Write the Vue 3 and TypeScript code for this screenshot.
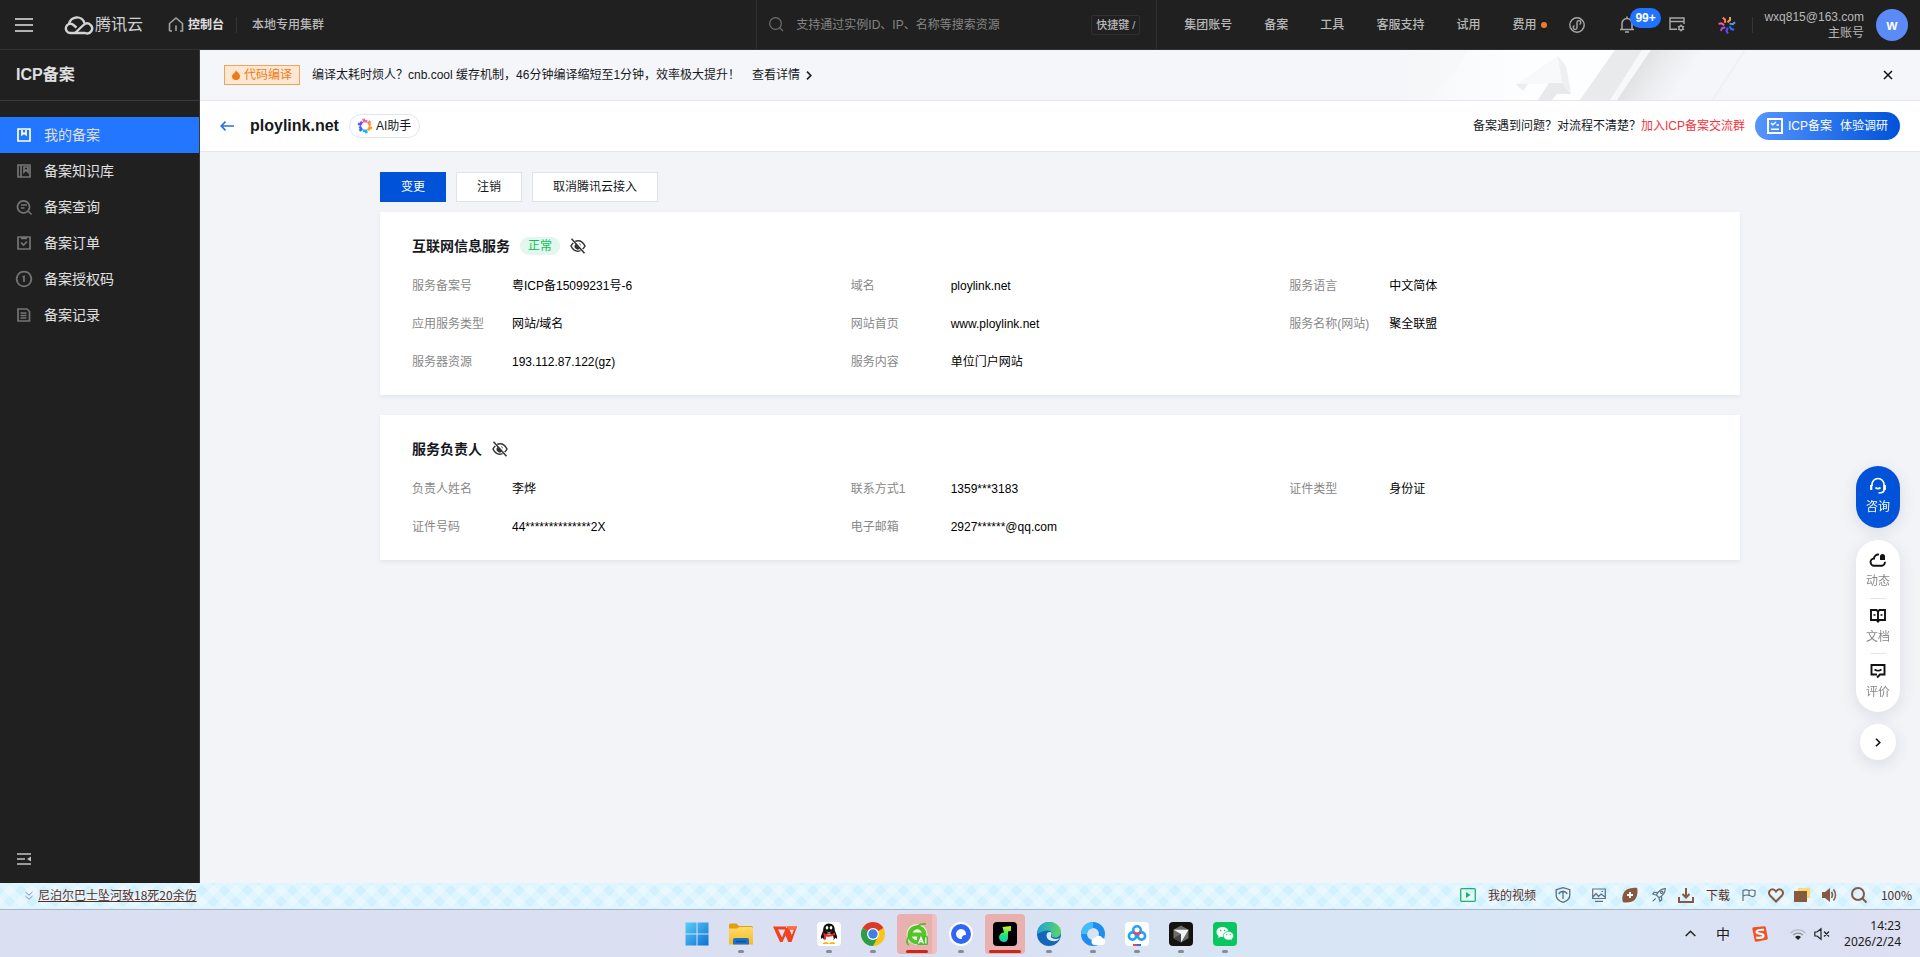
<script setup lang="ts">
interface NavItem {
  label: string
  icon: string
  active?: boolean
}

interface Field {
  label: string
  value: string
}

interface Section {
  title: string
  status?: string
  fields: Field[]
}

const topLinks: string[] = ['集团账号', '备案', '工具', '客服支持', '试用']

const navItems: NavItem[] = [
  { label: '我的备案', icon: 'M1 1h12v12H1zM5 2v4.5l2-1.5 2 1.500V2', active: true },
  { label: '备案知识库', icon: 'M1 1h12v12H1zM4 1v12M7 3v5l2-2 2 2V3z' },
  { label: '备案查询', icon: 'M6.500 .8a6 6 0 1 0 .01 0M11 11l3.500 3.500M4 5h6M4 8h3.500' },
  { label: '备案订单', icon: 'M1 1h12v12H1zM4 6.500l2.500 2.500L10 5.500M4 2.500h6' },
  { label: '备案授权码', icon: 'M7-.3a7.300 7.300 0 1 0 .01 0M5.500 5L7 4.500V10' },
  { label: '备案记录', icon: 'M1 1h9l2.500 2.500V13H1zM3.500 5h6M3.500 7.500h6M3.500 10h6' },
]

const sections: Section[] = [
  {
    title: '互联网信息服务',
    status: '正常',
    fields: [
      { label: '服务备案号', value: '粤ICP备15099231号-6' },
      { label: '域名', value: 'ploylink.net' },
      { label: '服务语言', value: '中文简体' },
      { label: '应用服务类型', value: '网站/域名' },
      { label: '网站首页', value: 'www.ploylink.net' },
      { label: '服务名称(网站)', value: '聚全联盟' },
      { label: '服务器资源', value: '193.112.87.122(gz)' },
      { label: '服务内容', value: '单位门户网站' },
    ],
  },
  {
    title: '服务负责人',
    fields: [
      { label: '负责人姓名', value: '李烨' },
      { label: '联系方式1', value: '1359***3183' },
      { label: '证件类型', value: '身份证' },
      { label: '证件号码', value: '44**************2X' },
      { label: '电子邮箱', value: '2927******@qq.com' },
    ],
  },
]

const sparkAngles: number[] = [0, 51, 103, 154, 206, 257, 309]
const sparkColors: string[] = ['#f5a040', '#3fa6e8', '#2f6bff', '#5b4bff', '#b04be0', '#f0609a', '#ff7a5c']
const aiAngles: number[] = [0, 60, 120, 180, 240, 300]
const aiColors: string[] = ['#ff5c9a', '#ff8a5c', '#ffa000', '#18b4ff', '#2f6bff', '#6a4bff']
</script>

<template>
  <div class="screen">
    <header class="topbar">
      <button class="plain menu-btn" aria-label="菜单">
        <svg width="18" height="14" viewBox="0 0 18 14"><path d="M0 1h18M0 7h18M0 13h18" stroke="#b3b3b3" stroke-width="2" /></svg>
      </button>
      <a href="#" class="brand">
        <svg width="26" height="20" viewBox="0 0 26 20" fill="none" stroke="#d4d4d4" stroke-width="2.400" stroke-linejoin="round">
          <path d="M5 9A8 8 0 0 1 20.500 8" />
          <path d="M11 18 L20 9.500a5 5 0 1 1 1 8.500H6.200A4.600 4.600 0 1 1 9.500 10l3 2.600" />
        </svg>
        <span>腾讯云</span>
      </a>
      <a href="#" class="console">
        <svg width="16" height="15" viewBox="0 0 16 15" fill="none" stroke="#a3a3a3" stroke-width="1.600"><path d="M1.500 14V6.500L8 1l6.500 5.500V14H12M4 14H1.500M8 14V8.500" /></svg>
        <span>控制台</span>
      </a>
      <span class="sep"></span>
      <a href="#" class="cluster">本地专用集群</a>

      <div class="search">
        <svg width="15" height="15" viewBox="0 0 15 15" fill="none" stroke="#707070" stroke-width="1.200"><circle cx="6.500" cy="6.500" r="5.800" /><path d="M10.500 10.500L14 14" /></svg>
        <input type="text" aria-label="搜索资源" placeholder="支持通过实例ID、IP、名称等搜索资源" />
        <kbd>快捷键 /</kbd>
      </div>

      <div class="tools">
        <a v-for="link in topLinks" :key="link" href="#" class="tool-link">{{ link }}</a>
        <a href="#" class="tool-link fee">费用<i></i></a>
        <button class="plain mini" aria-label="小程序">
          <svg width="16" height="16" viewBox="0 0 16 16" fill="none" stroke="#a8a8a8" stroke-width="1.400"><circle cx="8" cy="8" r="7.200" /><path d="M10.400 7.300A1.900 1.900 0 1 0 8 5.600V10.400A1.900 1.900 0 1 1 5.600 8.700" /></svg>
        </button>
        <button class="plain bell" aria-label="消息">
          <svg width="16" height="17" viewBox="0 0 16 17" fill="none" stroke="#a8a8a8" stroke-width="1.500"><path d="M1 13.500h14M3 13V7.500a5 5 0 0 1 10 0V13M8 .5v2M6 16h4" /></svg>
          <b>99+</b>
        </button>
        <button class="plain panel" aria-label="设置">
          <svg width="16" height="15" viewBox="0 0 16 15" fill="none" stroke="#a8a8a8" stroke-width="1.400"><path d="M8 12.300H1V1h14v6M1 4.500h14" /><circle cx="12" cy="11" r="2" /><path d="M12 7.500V9M12 13v1.500M8.900 9.200l1.300.8M13.800 12l1.300.8M8.900 12.800l1.300-.8M13.800 10l1.300-.8" stroke-width="1.200" /></svg>
        </button>
        <button class="plain spark" aria-label="助手">
          <svg width="16" height="16" viewBox="-8 -8 16 16" fill="none" stroke-width="2">
            <path v-for="(a, i) in sparkAngles" :key="a" d="M.5-2.800L3-5V-8" :stroke="sparkColors[i]" :transform="`rotate(${a})`" />
          </svg>
        </button>
        <span class="sep"></span>
        <div class="account"><span>wxq815@163.com</span><span>主账号</span></div>
        <button class="avatar" aria-label="账号">w</button>
      </div>
    </header>

    <div class="body">
      <aside class="sidebar">
        <h2>ICP备案</h2>
        <nav>
          <a v-for="item in navItems" :key="item.label" href="#" :class="{ active: item.active }">
            <svg width="16" height="16" viewBox="-1 -1 16 16" fill="none" stroke="currentColor" stroke-width="1.700"><path :d="item.icon" /></svg>
            <span>{{ item.label }}</span>
          </a>
        </nav>
        <button class="plain fold" aria-label="收起菜单">
          <svg width="14" height="12" viewBox="0 0 14 12"><path d="M0 1h14M0 6h8M0 11h14" stroke="#c2c2c2" stroke-width="1.500" /><path d="M14 3.500v5L10 6z" fill="#c2c2c2" /></svg>
        </button>
      </aside>

      <main>
        <div class="notice">
          <svg class="notice-art" width="360" height="50" viewBox="0 0 360 50" aria-hidden="true">
            <defs>
              <linearGradient id="haze" x1="0" x2="1"><stop offset="0" stop-color="#f9fafc" stop-opacity="0" /><stop offset=".25" stop-color="#f9fafc" /><stop offset=".6" stop-color="#fdfeff" /></linearGradient>
              <linearGradient id="shade" gradientUnits="userSpaceOnUse" x1="230" y1="22" x2="272" y2="50"><stop offset="0" stop-color="#dfe0e2" /><stop offset=".5" stop-color="#ecedef" /><stop offset="1" stop-color="#f5f6f9" /></linearGradient>
            </defs>
            <path d="M0 0H215L180 50H0z" fill="url(#haze)" />
            <path d="M68 0L35 50H0V0z" fill="#f5f6f8" opacity=".6" />
            <path d="M248 0H325L290 50H216z" fill="url(#shade)" />
            <path d="M215 0H244L211 50H180z" fill="#e9eaec" />
            <path d="M242 0h9L217 50h-7z" fill="#f7f8fa" />
            <path d="M116 34L158 6l7 10 6 28-9-10h-14z" fill="#f8f9fb" />
            <path d="M158 6l8 10 5 27-9-10z" fill="#eeeff1" />
            <path d="M116 34h12l-5 7z" fill="#ebecee" />
            <path d="M149 33h13l9 11H157l-5 6H138z" fill="#e8e9eb" />
            <path d="M344 0h2l-32 50h-3z" fill="#f0f1f3" />
          </svg>
          <span class="tag">
            <svg width="8" height="10" viewBox="0 0 8 10"><path d="M4 0c.5 2 4 3.300 4 6.200A3.900 3.900 0 0 1 4 10 3.900 3.900 0 0 1 0 6.200C0 4 3.500 3 4 0z" fill="#ed7b16" /></svg>
            代码编译
          </span>
          <span class="notice-text">编译太耗时烦人？cnb.cool 缓存机制，46分钟编译缩短至1分钟，效率极大提升！</span>
          <a href="#" class="more">查看详情
            <svg width="6" height="9" viewBox="0 0 6 9" fill="none" stroke="#222" stroke-width="1.700"><path d="M1 .7l3.800 3.800L1 8.300" /></svg>
          </a>
          <button class="plain close" aria-label="关闭">
            <svg width="10" height="10" viewBox="0 0 10 10" stroke="#111" stroke-width="1.500"><path d="M1 1l8 8M9 1L1 9" /></svg>
          </button>
        </div>

        <div class="title-row">
          <button class="plain back" aria-label="返回">
            <svg width="14" height="10" viewBox="0 0 14 10" fill="none" stroke="#2b6fe0" stroke-width="1.700"><path d="M5.500 .7L1.300 5l4.200 4.300M1.300 5H14" /></svg>
          </button>
          <h1>ploylink.net</h1>
          <button class="ai">
            <svg width="14" height="14" viewBox="-7 -7 14 14" fill="none" stroke-width="2.600">
              <path v-for="(a, i) in aiAngles" :key="a" d="M-1.500-7.200L-1-4.800 2.300-4.800" :stroke="aiColors[i]" :transform="`rotate(${a})`" />
            </svg>
            AI助手
          </button>
          <p class="help">备案遇到问题？对流程不清楚？<a href="#">加入ICP备案交流群</a></p>
          <button class="survey">
            <svg width="16" height="16" viewBox="0 0 16 16" fill="none" stroke="#fff"><path d="M1 1h14v14H1z" stroke-width="2" /><path d="M4 5l1.800 1.800L9 4M9.500 7H12M4 11.200h8" stroke-width="1.500" /></svg>
            <span>ICP备案</span><span>体验调研</span>
          </button>
        </div>

        <div class="content">
          <div class="actions">
            <button class="primary">变更</button>
            <button>注销</button>
            <button>取消腾讯云接入</button>
          </div>
          <section v-for="section in sections" :key="section.title" class="card">
            <header>
              <h3>{{ section.title }}</h3>
              <span v-if="section.status" class="status">{{ section.status }}</span>
              <button class="plain eye" aria-label="显示完整信息">
                <svg width="16" height="16" viewBox="0 0 16 16" fill="none" stroke="#333" stroke-width="1.500">
                  <path d="M5.300 3.300C9.500 1.800 13 4 15 8c-.6 1.200-1.400 2.200-2.300 3M10.500 12.600C6.500 14.200 3 12 1 8c.6-1.200 1.400-2.200 2.300-3M1.500 .8l13 14.500" />
                  <path d="M5.500 6A3 3 0 0 0 10 10.500zM8.500 5A3 3 0 0 1 11 8z" fill="#333" stroke="none" />
                </svg>
              </button>
            </header>
            <dl>
              <div v-for="field in section.fields" :key="field.label">
                <dt>{{ field.label }}</dt>
                <dd>{{ field.value }}</dd>
              </div>
            </dl>
          </section>
        </div>
      </main>

      <div class="float">
        <button class="consult">
          <svg width="16" height="16" viewBox="0 0 16 16" fill="none" stroke="#fff" stroke-width="1.700"><path d="M2 8V6.500a6 6 0 0 1 12 0V12q0 3-5.500 3" /><path d="M5.500 9.500q2.500 2.300 5 0" /><path d="M1.200 7v5M14.800 7v5" stroke-width="2.200" /></svg>
          <span>咨询</span>
        </button>
        <div class="float-group">
          <button>
            <svg width="16" height="14" viewBox="0 0 16 14" fill="none" stroke="#111" stroke-width="1.900"><path d="M9 1.700A4 4 0 0 0 4 5.500 3.600 3.600 0 0 0 4.300 12.700H12a3.300 3.300 0 0 0 2.800-4" /><path d="M10 7V3.500a2.500 2.500 0 0 1 5 0V7z" fill="#111" stroke="none" /></svg>
            <span>动态</span>
          </button>
          <button>
            <svg width="16" height="14" viewBox="0 0 16 14" fill="none" stroke="#111" stroke-width="1.900"><path d="M8 12.500L6.500 11H1V1h5.500L8 2.500 9.500 1H15v10H9.500zM8 2v11.500" /><path d="M3.500 6h2M10.500 6h2" stroke-width="1.400" /></svg>
            <span>文档</span>
          </button>
          <button>
            <svg width="16" height="14" viewBox="0 0 16 14" fill="none" stroke="#111" stroke-width="1.900"><path d="M7 10.500H1.500V1h13v9.500H10L7 13.500" /><path d="M4.500 5.500q3.500 2.500 7 0" stroke-width="1.600" /></svg>
            <span>评价</span>
          </button>
        </div>
        <button class="expand" aria-label="展开">
          <svg width="6" height="9" viewBox="0 0 6 9" fill="none" stroke="#111" stroke-width="1.600"><path d="M1 .7l3.800 3.800L1 8.300" /></svg>
        </button>
      </div>
    </div>

    <div class="statusbar">
      <button class="plain" aria-label="展开资讯">
        <svg width="8" height="9" viewBox="0 0 8 9" fill="none" stroke="#7a93a8"><path d="M.5 1L4 4.300 7.500 1M.5 5L4 8.300 7.500 5" /></svg>
      </button>
      <a href="#" class="news">尼泊尔巴士坠河致18死20余伤</a>
      <div class="status-tools">
        <button class="plain g-video">
          <svg width="16" height="14" viewBox="0 0 16 14"><rect x=".7" y=".7" width="14.600" height="12.600" rx="1" fill="none" stroke="#1fb45c" stroke-width="1.300" /><path d="M6 4v6l4.500-3z" fill="#1fb45c" /></svg>
          我的视频
        </button>
        <button class="plain g-shield" aria-label="安全">
          <svg width="16" height="16" viewBox="0 0 16 16" fill="none" stroke="#5d7080" stroke-width="1.300"><path d="M8 .7l6.800 2v5.500c0 3.500-3 5.800-6.800 7.200C4.200 14 1.200 11.700 1.200 8.200V2.700z" /><path d="M3.800 7q1-2.500 4.200-2.500T12.200 7M8 3.500V12" /></svg>
        </button>
        <button class="plain g-image" aria-label="图片">
          <svg width="14" height="14" viewBox="0 0 14 14" fill="none" stroke="#5d7080" stroke-width="1.200"><path d="M.7 1h12.600v9.500H.7zM1 9l3-3.500 2.500 3L9 6l4 3M3 13.300h8M9.500 3.500h1.500" /></svg>
        </button>
        <button class="plain g-plus" aria-label="扩展">
          <svg width="16" height="16" viewBox="0 0 16 16"><path d="M15 .8C15.800 2.500 16 9 13 12.500 11 15 6 16 1 15.200-.3 12 .2 6.500 3.500 3.500 6.500.8 11.500.3 15 .8z" fill="#87593f" /><path d="M8 5v6M5 8h6" stroke="#fff" stroke-width="1.800" /></svg>
        </button>
        <button class="plain g-rocket" aria-label="加速">
          <svg width="14" height="14" viewBox="0 0 14 14" fill="none" stroke="#5d7080" stroke-width="1.200"><path d="M13.300.7C9 .8 6.500 3 4.300 7L7 9.700C11 7.500 13.200 5 13.300.7zM5.500 4.500L2 4.300.8 6l3 1M9.500 8.500l.2 3.500L8 13.200l-1-3M.7 13.300l3-3" /><circle cx="9.700" cy="4.300" r="1.200" /></svg>
        </button>
        <button class="plain g-down">
          <svg width="16" height="16" viewBox="0 0 16 16" fill="none" stroke="#87593f" stroke-width="2"><path d="M1 10v5h14v-5M8 1v9M4.500 7L8 10.500 11.500 7" /></svg>
          下载
        </button>
        <button class="plain g-flag" aria-label="标记">
          <svg width="14" height="12" viewBox="0 0 14 12" fill="none" stroke="#5d7080" stroke-width="1.200"><path d="M1 12V1.500q3-1.200 6 0 3-1 6 0V6q-1 1.800-3 1.500L7 6.300Q4 5.500 1 7M7 1.500v5" /></svg>
        </button>
        <button class="plain g-heart" aria-label="收藏">
          <svg width="16" height="15" viewBox="0 0 16 15" fill="none" stroke="#87593f" stroke-width="2"><path d="M8 13.500L2 7.500C-.3 4.500 2 1.200 4.500 1.200 6.500 1.200 8 3.500 8 3.500s1.500-2.300 3.500-2.300C14 1.200 16.300 4.500 14 7.500z" /></svg>
        </button>
        <button class="plain g-skin" aria-label="窗口">
          <svg width="16" height="14" viewBox="0 0 16 14"><path d="M4 0h12v10H4z" fill="#ffd773" /><path d="M0 3h13v11H0z" fill="#87593f" /></svg>
        </button>
        <button class="plain g-vol" aria-label="声音">
          <svg width="15" height="14" viewBox="0 0 15 14"><path d="M0 4h3l5-4v14l-5-4H0z" fill="#87593f" /><path d="M9.500 4q2 3 0 6M11.500 1.500q4 5.500 0 11" fill="none" stroke="#87593f" stroke-width="1.500" /></svg>
        </button>
        <button class="plain g-find" aria-label="查找">
          <svg width="16" height="16" viewBox="0 0 16 16" fill="none" stroke="#87593f" stroke-width="2"><circle cx="7" cy="7" r="6" /><path d="M11.500 11.500l4 4" /></svg>
        </button>
        <button class="plain g-zoom">100%</button>
      </div>
    </div>

    <div class="taskbar">
      <div class="apps">
        <button class="app" aria-label="开始">
          <svg width="24" height="24" viewBox="0 0 24 24"><defs><linearGradient id="win" gradientUnits="userSpaceOnUse" x1="0" y1="0" x2="24" y2="24"><stop stop-color="#5cd0fa" /><stop offset="1" stop-color="#0a6fd0" /></linearGradient></defs><path d="M.5.500h11v11H.5zM12.500.500h11v11h-11zM.5 12.500h11v11H.5zM12.500 12.500h11v11h-11z" fill="url(#win)" /></svg>
        </button>
        <button class="app run" aria-label="文件资源管理器">
          <svg width="24" height="24" viewBox="0 0 24 24"><defs><linearGradient id="fold" y2="1" x2="0"><stop stop-color="#ffdc6b" /><stop offset="1" stop-color="#f8b920" /></linearGradient></defs><path d="M0 3q0-1.500 1.500-1.500h6L10 4h12.500Q24 4 24 5.500V9H0z" fill="#e0a010" /><path d="M0 6.500h8L10.500 5H22.500Q24 5 24 6.500V22.500H0z" fill="url(#fold)" /><path d="M4 22.500V18q0-2 2-2h12q2 0 2 2v4.500z" fill="#1a72c8" /><path d="M7 19.500h10" stroke="#0f4f94" stroke-width="1.500" /></svg>
        </button>
        <button class="app" aria-label="WPS">
          <svg width="24" height="24" viewBox="0 0 24 24"><path d="M0 4.500h13.500l-1.300 3H5l4 8L12.800 6h3l3 7L21 7.500h-6L13.800 4.500H24L18.500 20h-3.200L12.500 13.500 9.500 20H7z" fill="#f0421f" /><path d="M13.800 4.500H24l-1.200 3H15z" fill="#ff6a3c" /></svg>
        </button>
        <button class="app run" aria-label="QQ">
          <svg width="24" height="24" viewBox="0 0 24 24"><rect width="24" height="24" rx="4" fill="#fff" /><path d="M12 1.500c-4 0-6 3-5.800 7C5 11.500 3.500 14 4 16.500c.8.5 1.500-.5 2-1 .5 5 11.500 5 12 0 .5.5 1.200 1.500 2 1 .5-2.500-1-5-2.200-8 .2-4-1.800-7-5.800-7z" fill="#111" /><ellipse cx="12" cy="16.500" rx="4.700" ry="5" fill="#fff" /><ellipse cx="10" cy="5.800" rx="1.300" ry="1.800" fill="#fff" /><ellipse cx="14" cy="5.800" rx="1.300" ry="1.800" fill="#fff" /><path d="M8 9q4 2 8 0l-4 2z" fill="#ffb400" /><path d="M6 10.500q6 4 12 0v2.500q-4 2.500-9 1.500v3H7v-3.500z" fill="#e8262c" /><path d="M6 21.500q3-2 5.500 0zM12.500 21.500q3-2 5.500 0z" fill="#ffb400" stroke="#ffb400" /></svg>
        </button>
        <button class="app run" aria-label="Chrome">
          <svg width="24" height="24" viewBox="0 0 24 24"><circle cx="12" cy="12" r="12" fill="#f9c41b" /><path d="M12 12L1.600 6A12 12 0 0 1 22.400 6z" fill="#d93a2f" /><path d="M12 12L1.600 6A12 12 0 0 0 12 24l5-9z" fill="#2b9e4b" /><circle cx="12" cy="12" r="6" fill="#fff" /><circle cx="12" cy="12" r="4.700" fill="#3f7ee8" /></svg>
        </button>
        <button class="app run hot stack" aria-label="360浏览器">
          <svg width="24" height="24" viewBox="0 0 24 24" fill="none"><circle cx="12" cy="12.500" r="10.500" fill="#e9fbd8" /><path d="M18.500 16.500A7.500 7.500 0 1 1 19.500 12.500H6" stroke="#55c62c" stroke-width="4" /><path d="M4 23Q-1 21 6 11T21 2" stroke="#58b82f" stroke-width="1.600" /><rect x="12" y="14" width="11" height="9" rx="1.500" fill="#55b933" /><path d="M13.500 21.500l2.500-6 2.500 6M20.800 15.500v6M14.500 19.500h3" stroke="#fff" stroke-width="1.300" /></svg>
        </button>
        <button class="app run" aria-label="夸克">
          <svg width="24" height="24" viewBox="0 0 24 24"><circle cx="12" cy="12" r="12" fill="#fff" /><circle cx="12" cy="12" r="10" fill="#2f66f5" /><path d="M12 7a5 5 0 1 0 1 9.900c-.5-2.500 1-4 3.900-3.900A5 5 0 0 0 12 7z" fill="#fff" /></svg>
        </button>
        <button class="app run hot" aria-label="音乐">
          <svg width="24" height="24" viewBox="0 0 24 24"><defs><linearGradient id="note" y2="1" x2="0"><stop stop-color="#d7f51c" /><stop offset=".6" stop-color="#1fe27a" /><stop offset="1" stop-color="#16c8c8" /></linearGradient></defs><rect width="24" height="24" rx="4" fill="#000" /><path d="M9.500 5l8.500-1v5l-3 .5V15A5 5 0 0 1 12 20a5 5 0 0 1-6-4.500A5 5 0 0 1 11 10.500z" fill="url(#note)" /></svg>
        </button>
        <button class="app run" aria-label="Edge">
          <svg width="24" height="24" viewBox="0 0 24 24"><defs><linearGradient id="edge" x2="1" y2="0"><stop stop-color="#1aa3dc" /><stop offset="1" stop-color="#5fd662" /></linearGradient></defs><circle cx="12" cy="12" r="12" fill="#1466b8" /><path d="M0 11.500C1 4.500 6 0 12 0c7 0 12 5 12 9.500 0 4-3 6-6 6-2.500 0-4-.8-3.500-2 .5-1.500.5-5-4-5C5 8.500 2 12 0 11.500z" fill="url(#edge)" /><path d="M9.500 13.500c0-2.500 1.500-3.500 3.300-3.500 1.700 0 2.200 1.500 1.200 3.500-1 3 4.500 4.500 9 2.500-2 3-5 3.500-8 3-3.500-.5-5.500-2.500-5.500-5.500z" fill="#dcebf7" /></svg>
        </button>
        <button class="app run" aria-label="QQ浏览器">
          <svg width="24" height="24" viewBox="0 0 24 24"><circle cx="12" cy="12" r="9" fill="none" stroke="#1f8df0" stroke-width="6" /><path d="M3 12a9 9 0 0 1 9-9" fill="none" stroke="#43bdf8" stroke-width="6" /><path d="M14 23a3.500 3.500 0 0 1 0-7 4.200 4.200 0 0 1 7.500 0 3.600 3.600 0 0 1 0 7z" fill="#fff" /></svg>
        </button>
        <button class="app run" aria-label="百度网盘">
          <svg width="24" height="24" viewBox="0 0 24 24" fill="none" stroke-width="2.600"><rect width="24" height="24" rx="4" fill="#fff" /><circle cx="12" cy="8" r="3.800" stroke="#2a9df4" /><circle cx="7.500" cy="14" r="3.600" stroke="#19a7f2" /><circle cx="16.500" cy="14" r="3.600" stroke="#2a9df4" /><path d="M8.500 10q3.500 4 7 0" stroke="#f04455" /><path d="M8 23h4" stroke="#f04455" stroke-width="2" /><path d="M12 23h4" stroke="#2a6df4" stroke-width="2" /></svg>
        </button>
        <button class="app run" aria-label="Cursor">
          <svg width="24" height="24" viewBox="0 0 24 24"><rect width="24" height="24" rx="4" fill="#15130f" /><path d="M12 3.500l7.500 4.200v8.600L12 20.500l-7.500-4.200V7.700z" fill="#6d6d6d" /><path d="M4.500 7.700h15L12 20.500v-8.500z" fill="#f2f2f2" /><path d="M4.500 16.300L12 12v8.500z" fill="#444" /></svg>
        </button>
        <button class="app run" aria-label="微信">
          <svg width="24" height="24" viewBox="0 0 24 24"><rect width="24" height="24" rx="4" fill="#08c660" /><path d="M9.500 5C6 5 3.500 7.300 3.500 10c0 1.600.8 3 2.200 3.900L5 16l2.500-1.200q1 .3 2 .3C13 15 15.500 12.700 15.500 10S13 5 9.500 5z" fill="#fff" /><path d="M15.500 9.500c-3 0-5.200 2-5.200 4.300s2.200 4.300 5.200 4.300q.9 0 1.700-.3l2.100 1-.5-1.800c1.200-.8 1.900-2 1.900-3.200 0-2.300-2.200-4.300-5.200-4.300z" fill="#fff" stroke="#08c660" stroke-width=".7" /><path d="M7 8.500h1.200M11 8.500h1.200M13.300 12.500h1M16.700 12.500h1" stroke="#08c660" stroke-width="1.300" /></svg>
        </button>
      </div>
      <div class="tray">
        <button class="plain t-up" aria-label="显示隐藏的图标"><svg width="11" height="7" viewBox="0 0 11 7" fill="none" stroke="#222" stroke-width="1.500"><path d="M.7 6l4.800-4.800L10.300 6" /></svg></button>
        <button class="plain t-ime">中</button>
        <button class="plain t-sogou" aria-label="输入法"><svg width="16" height="16" viewBox="0 0 16 16"><path d="M.3 2.800Q.2 1.500 1.500 1.300L12 .2q1.500-.1 1.800 1.200L15.800 12q.2 1.500-1.200 1.800L4.500 15.800Q3 16 2.700 14.500z" fill="#f0532a" /><path d="M12 3.800Q5 3.500 4.500 6c0 2.500 7 .8 7 3.700 0 2.300-4 2.300-7.300 2" fill="none" stroke="#fff" stroke-width="2.200" /></svg></button>
        <button class="plain t-wifi" aria-label="网络"><svg width="16" height="12" viewBox="0 0 16 12" fill="none"><path d="M.8 5a10 10 0 0 1 14.400 0" stroke="#b5bac6" stroke-width="1.200" /><path d="M3 7.200a7 7 0 0 1 10 0" stroke="#8a8f9a" stroke-width="1.200" /><path d="M5 9a4.500 4.500 0 0 1 6 0L8 12z" fill="#222" /></svg></button>
        <button class="plain t-mute" aria-label="静音"><svg width="16" height="12" viewBox="0 0 16 12" fill="none" stroke="#222" stroke-width="1.200"><path d="M.8 4H3l4-3.200v10.400L3 8H.8zM10 3.500l5 5M15 3.500l-5 5" /></svg></button>
        <div class="clock"><span>14:23</span><span>2026/2/24</span></div>
      </div>
    </div>
  </div>
</template>

<style>
body {
  margin: 0;
}
</style>

<style scoped>
.screen {
  display: flex;
  flex-direction: column;
  min-height: 100vh;
  font: 12px/20px "Liberation Sans", "Noto Sans CJK SC", sans-serif;
  color: #16181d;
  background: #f2f4f8;
}

* {
  box-sizing: border-box;
}

button,
input,
kbd {
  font: inherit;
  color: inherit;
}

button {
  cursor: pointer;
}

a {
  color: inherit;
  text-decoration: none;
}

svg {
  display: block;
  flex: none;
  overflow: visible;
}

.plain {
  display: flex;
  align-items: center;
  padding: 0;
  border: 0;
  background: none;
}

/* top bar */
.topbar {
  display: flex;
  align-items: center;
  height: 50px;
  padding: 0 12px 0 15px;
  background: #202020;
  border-bottom: 1px solid #303030;
  color: #b8b8b8;
  white-space: nowrap;
}

.brand {
  display: flex;
  align-items: center;
  gap: 5px;
  margin-left: 31px;
  font-size: 16px;
  color: #d0d0d0;
}

.console {
  display: flex;
  align-items: center;
  gap: 4px;
  margin-left: 25px;
  font-weight: 700;
  color: #e0e0e0;
}

.sep {
  width: 1px;
  height: 16px;
  margin: 0 15px 0 12px;
  background: #343434;
}

.cluster,
.tool-link {
  font-weight: 500;
}

.search {
  display: flex;
  align-items: center;
  flex: 0 1 401px;
  height: 49px;
  margin-left: auto;
  padding: 0 16px 0 12px;
  border: solid #303030;
  border-width: 0 1px;
}

.search input {
  flex: 1;
  min-width: 0;
  margin-left: 12px;
  padding: 0;
  border: 0;
  outline: 0;
  background: none;
}

.search input::placeholder {
  color: #858585;
  opacity: 1;
}

.search kbd {
  padding: 0 4px;
  border: 1px solid #303030;
  border-radius: 2px;
  font-size: 11px;
  line-height: 18px;
  font-weight: 500;
}

.tools {
  display: flex;
  align-items: center;
  padding-left: 11px;
}

.tool-link {
  padding: 0 16px;
}

.fee {
  display: flex;
  align-items: center;
  gap: 5px;
  padding-right: 0;
}

.fee i {
  width: 6px;
  height: 6px;
  border-radius: 50%;
  background: #ed7b2f;
}

.mini {
  margin-left: 22px;
}

.bell {
  position: relative;
  margin-left: 34px;
}

.bell b {
  position: absolute;
  left: 11px;
  top: -8px;
  padding: 0 5px;
  border-radius: 10px;
  background: #1f73ff;
  color: #fff;
}

.panel,
.spark {
  margin-left: 34px;
}

.tools .sep {
  margin: 0 11px 0 17px;
}

.account {
  display: flex;
  flex-direction: column;
  align-items: flex-end;
  line-height: 16px;
}

.avatar {
  width: 32px;
  height: 32px;
  margin-left: 12px;
  padding: 0;
  border: 0;
  border-radius: 50%;
  background: #5a8bf7;
  color: #fff;
  font-size: 14px;
  font-weight: 700;
}

/* main frame */
.body {
  display: flex;
  flex: 1;
}

.sidebar {
  display: flex;
  flex-direction: column;
  flex: none;
  width: 200px;
  background: #202020;
  border-right: 1px solid #3a3a3a;
  color: #e0e0e0;
}

.sidebar h2 {
  margin: 0;
  padding: 13px 16px 13px;
  border-bottom: 1px solid #3a3a3a;
  font-size: 16px;
  line-height: 24px;
}

.sidebar nav {
  margin-top: 16px;
}

.sidebar nav a {
  display: flex;
  align-items: center;
  gap: 12px;
  height: 36px;
  padding-left: 16px;
  font-size: 14px;
}

.sidebar nav svg {
  color: #747474;
}

.sidebar nav .active {
  background: #2276ff;
}

.sidebar nav .active svg {
  color: #fff;
}

.fold {
  margin: auto 0 18px 17px;
}

main {
  flex: 1;
  min-width: 0;
}

.notice {
  position: relative;
  display: flex;
  align-items: center;
  height: 51px;
  padding: 0 27px 0 24px;
  background: #f5f6f9;
  border-bottom: 1px solid #e5e7ed;
}

.notice-art {
  position: absolute;
  right: 160px;
  top: 0;
}

.tag {
  display: flex;
  align-items: center;
  gap: 4px;
  padding: 0 7px;
  border: 1px solid #f5a35b;
  background: #ffe8d3;
  color: #ed7b16;
  line-height: 18px;
}

.notice-text {
  margin-left: 12px;
}

.more {
  display: flex;
  align-items: center;
  gap: 6px;
  margin-left: 12px;
}

.close {
  margin-left: auto;
}

.title-row {
  display: flex;
  align-items: center;
  height: 51px;
  padding: 0 20px;
  background: #fff;
  border-bottom: 1px solid #e5e7ed;
}

.title-row h1 {
  margin: 0 0 0 16px;
  font-size: 16px;
  line-height: 24px;
}

.ai {
  display: flex;
  align-items: center;
  gap: 4px;
  height: 24px;
  margin-left: 10px;
  padding: 0 8px;
  border: 1px solid #e2e5ec;
  border-radius: 12px;
  background: #fff;
}

.help {
  margin: 0 0 0 auto;
}

.help a {
  color: #f5333c;
}

.survey {
  display: flex;
  align-items: center;
  gap: 5px;
  height: 28px;
  margin-left: 10px;
  padding: 0 12px;
  border: 0;
  border-radius: 14px;
  background: linear-gradient(90deg, #5595ff, #0052d9);
  color: #fff;
}

.survey span + span {
  margin-left: 3px;
}

.content {
  max-width: 1360px;
  margin: 0 auto;
  padding-top: 20px;
}

.actions {
  display: flex;
  gap: 10px;
  margin-bottom: 10px;
}

.actions button {
  height: 30px;
  padding: 0 20px;
  border: 1px solid #e0e3ea;
  background: #fff;
}

.actions .primary {
  background: #0052d9;
  border-color: #0052d9;
  color: #fff;
}

.card {
  margin-bottom: 20px;
  padding: 24px 32px 14px;
  background: #fff;
  box-shadow: 0 2px 4px rgba(54, 58, 80, 0.08);
}

.card header {
  display: flex;
  align-items: center;
  margin-bottom: 11px;
}

.card h3 {
  margin: 0;
  font-size: 14px;
  line-height: 20px;
}

.status {
  margin-left: 10px;
  padding: 0 8px;
  border-radius: 9px;
  background: #e2f7ed;
  color: #0abf5b;
  line-height: 18px;
}

.eye {
  margin-left: 10px;
}

.card dl {
  display: grid;
  grid-template-columns: repeat(3, 1fr);
  column-gap: 20px;
  margin: 0;
}

.card dl div {
  display: flex;
  padding: 9px 0;
}

.card dt {
  width: 100px;
  color: #888;
}

.card dd {
  margin: 0;
  color: #000;
}

/* floating helper over the content */
.float {
  position: fixed;
  right: 20px;
  top: 466px;
  display: flex;
  flex-direction: column;
  align-items: center;
  gap: 12px;
}

.float button {
  display: flex;
  flex-direction: column;
  align-items: center;
  border: 0;
  padding: 0;
  background: none;
}

.float .consult {
  gap: 3px;
  width: 44px;
  height: 62px;
  padding-top: 12px;
  border-radius: 22px;
  background: #0052d9;
  color: #fff;
  box-shadow: 0 4px 16px rgba(54, 58, 80, 0.12);
}

.float-group {
  width: 44px;
  padding: 0 14px 4px;
  border-radius: 22px;
  background: #fff;
  color: #888;
  box-shadow: 0 4px 16px rgba(54, 58, 80, 0.12);
}

.float-group button {
  gap: 4px;
  width: 16px;
  height: 55px;
  padding-top: 10px;
  white-space: nowrap;
}

.float-group button:first-child {
  height: 58px;
  padding-top: 13px;
}

.float-group button + button {
  border-top: 1px solid #e2e5ec;
}

.float .expand {
  justify-content: center;
  width: 36px;
  height: 36px;
  border-radius: 50%;
  background: #fff;
  box-shadow: 0 4px 16px rgba(54, 58, 80, 0.12);
}

/* browser status bar */
.statusbar {
  display: flex;
  align-items: center;
  height: 27px;
  padding: 0 8px 2px 25px;
  border-bottom: 1px solid #a9b5c6;
  background:
    repeating-linear-gradient(45deg, rgba(255, 255, 255, 0.3) 0 8px, transparent 8px 16px),
    repeating-linear-gradient(-45deg, rgba(255, 255, 255, 0.3) 0 8px, transparent 8px 16px),
    #d2f1ff;
  color: #5b2e1c;
  font-family: "Noto Sans CJK SC", sans-serif;
}

.news {
  margin-left: 5px;
  text-decoration: underline;
}

.status-tools {
  display: flex;
  align-items: center;
  margin-left: auto;
}

.g-video,
.g-down {
  gap: 12px;
}

.g-shield {
  margin-left: 19px;
}

.g-image {
  margin-left: 21px;
}

.g-plus {
  margin-left: 16px;
}

.g-rocket {
  margin-left: 14px;
}

.g-down,
.g-flag,
.g-heart,
.g-vol {
  margin-left: 12px;
}

.g-skin {
  margin-left: 10px;
}

.g-find,
.g-zoom {
  margin-left: 14px;
}

/* desktop taskbar */
.taskbar {
  display: grid;
  grid-template-columns: 1fr auto 1fr;
  align-items: center;
  height: 47px;
  padding-left: 2px;
  background: linear-gradient(90deg, #dadff2 45%, #d8e5f5 65%, #d8e5f5 80%, #dddff2);
  font-family: "Noto Sans", "Noto Sans CJK SC", sans-serif;
}

.apps {
  grid-column: 2;
  display: flex;
  gap: 4px;
}

.app {
  position: relative;
  display: flex;
  justify-content: center;
  width: 40px;
  height: 40px;
  padding: 8px 0 0;
  border: 0;
  border-radius: 4px;
  background: none;
}

.run::after {
  content: "";
  position: absolute;
  left: 17px;
  bottom: 1px;
  width: 6px;
  height: 3px;
  border-radius: 2px;
  background: #858b98;
}

.hot {
  background: #e9b0b0;
}

.hot::after {
  left: 4px;
  width: 32px;
  background: #c42b1c;
}

.stack {
  padding-left: 5px;
  border-right: 5px solid #efbfc2;
}

.stack::after {
  left: 9px;
  width: 22px;
}

.tray {
  display: flex;
  align-items: center;
  justify-content: flex-end;
  padding-right: 19px;
  color: #1b1b1b;
}

.t-ime {
  margin-left: 20px;
  font-size: 14px;
}

.t-sogou {
  margin-left: 22px;
}

.t-wifi {
  margin-left: 22px;
}

.t-mute {
  margin-left: 8px;
}

.clock {
  display: flex;
  flex-direction: column;
  align-items: flex-end;
  margin-left: 14px;
  line-height: 16px;
}
</style>
